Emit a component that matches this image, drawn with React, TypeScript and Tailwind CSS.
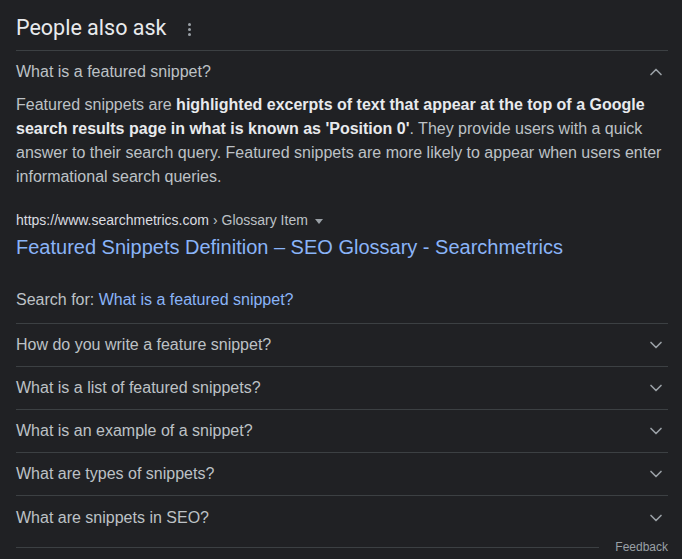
import { ChevronDown, ChevronUp } from "lucide-react";

const questions = [
  "How do you write a feature snippet?",
  "What is a list of featured snippets?",
  "What is an example of a snippet?",
  "What are types of snippets?",
  "What are snippets in SEO?",
];

export default function App() {
  return (
    <div className="min-h-screen bg-[#202124] font-['Liberation_Sans',Arial,sans-serif]">
      <div className="pl-4 pr-[14px]">
        {/* Header */}
        <div className="flex h-[51px] items-center gap-[22px] border-b border-[#3c4043] pt-[6px]">
          <h2 className="font-['Roboto',sans-serif] text-[21.5px] text-[#e8eaed] leading-none">People also ask</h2>
          <span className="flex flex-col gap-[2px] pt-[2px]">
            <span className="h-[3px] w-[3px] rounded-full bg-[#9aa0a6]" />
            <span className="h-[3px] w-[3px] rounded-full bg-[#9aa0a6]" />
            <span className="h-[3px] w-[3px] rounded-full bg-[#9aa0a6]" />
          </span>
        </div>

        {/* Expanded question */}
        <div className="border-b border-[#3c4043]">
          <div className="flex h-[42px] items-center justify-between">
            <span className="text-[16px] text-[#bdc1c6]">What is a featured snippet?</span>
            <ChevronUp className="mr-[2px] h-5 w-5 text-[#9aa0a6]" strokeWidth={2} />
          </div>
          <p className="text-[16px] leading-6 text-[#bdc1c6]">
            Featured snippets are{" "}
            <b className="text-[#e8eaed]">
              highlighted excerpts of text that appear at the top of a Google search results page in what is known as
              'Position 0'
            </b>
            . They provide users with a quick answer to their search query. Featured snippets are more likely to appear
            when users enter informational search queries.
          </p>
          <div className="mt-[21px] flex items-center text-[14px] leading-5">
            <span className="text-[#dadce0]">https://www.searchmetrics.com</span>
            <span className="ml-1 text-[#bdc1c6]">› Glossary Item</span>
            <span className="ml-[7px] mt-[2px] h-0 w-0 border-x-[4px] border-t-[5px] border-x-transparent border-t-[#9aa0a6]" />
          </div>
          <a className="mt-[4px] block text-[20px] leading-[26px] text-[#8ab4f8]">
            Featured Snippets Definition – SEO Glossary - Searchmetrics
          </a>
          <div className="mt-[28px] pb-[11px] text-[16px] leading-6 text-[#bdc1c6]">
            Search for: <span className="text-[#8ab4f8]">What is a featured snippet?</span>
          </div>
        </div>

        {/* Collapsed questions */}
        {questions.map((q, i) => (
          <div
            key={q}
            className={`flex h-[43px] items-center justify-between ${i < questions.length - 1 ? "border-b border-[#3c4043]" : ""}`}
          >
            <span className="text-[16px] text-[#bdc1c6]">{q}</span>
            <ChevronDown className="mr-[2px] h-5 w-5 text-[#9aa0a6]" strokeWidth={2} />
          </div>
        ))}

        {/* Footer */}
        <div className="flex h-4 items-center gap-4">
          <div className="h-px flex-1 bg-[#3c4043]" />
          <span className="-mt-px text-[12px] leading-none text-[#9aa0a6]">Feedback</span>
        </div>
      </div>
    </div>
  );
}
